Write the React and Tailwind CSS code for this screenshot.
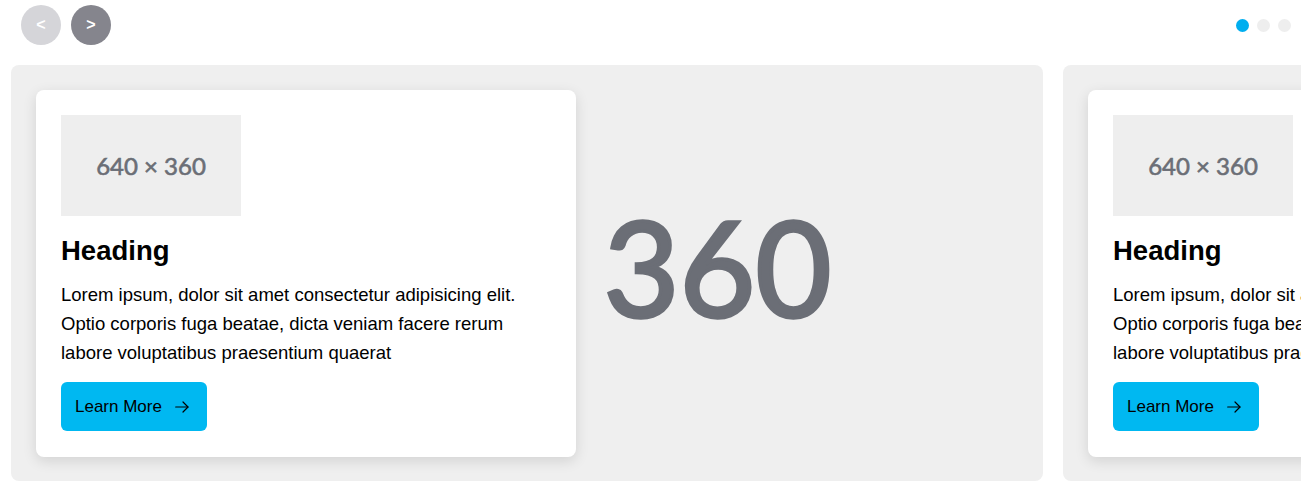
const slides = [1, 2, 3];

function Arrow() {
  return (
    <svg width="14" height="12" viewBox="0 0 14 12" fill="none" stroke="currentColor" strokeWidth="1.2" strokeLinecap="round" strokeLinejoin="round">
      <path d="M0.7 6h12.3" />
      <path d="M8 1l5 5-5 5" />
    </svg>
  );
}

function Slide() {
  return (
    <div className="relative shrink-0 w-[1032px] h-[416px] rounded-lg bg-[#efefef] overflow-hidden p-[25px]">
      <div className="absolute inset-0 flex items-center justify-center">
        <span className="font-['Lato',sans-serif] font-normal text-[131px] leading-none text-[#6b6e76] [-webkit-text-stroke:3.5px_#6b6e76] whitespace-nowrap -translate-y-[7px] translate-x-[5px]">
          640 × 360
        </span>
      </div>
      <div className="relative w-[540px] h-[367px] bg-white rounded-lg shadow-[0_4px_14px_rgba(0,0,0,0.12)] p-[25px] font-['Liberation_Sans',Arial,sans-serif]">
        <div className="w-[180px] h-[101px] bg-[#eeeeee] flex items-center justify-center">
          <span className="font-['Lato',sans-serif] font-normal text-[24px] text-[#6b6e76] [-webkit-text-stroke:0.6px_#6b6e76]">640 × 360</span>
        </div>
        <h2 className="mt-[15px] text-[27.5px] font-bold leading-[40px] text-black">Heading</h2>
        <p className="mt-[9px] text-[18.5px] leading-[29px] text-black">
          Lorem ipsum, dolor sit amet consectetur adipisicing elit. Optio corporis fuga beatae, dicta veniam facere rerum labore voluptatibus praesentium quaerat
        </p>
        <button className="mt-[15px] h-[49px] pl-[14px] pr-[18px] rounded-md bg-[#00b8f1] text-black text-[17px] flex items-center gap-[13px]">
          Learn More
          <Arrow />
        </button>
      </div>
    </div>
  );
}

export default function App() {
  return (
    <div className="w-[1312px] h-[489px] bg-white overflow-hidden font-['Liberation_Sans',Arial,sans-serif]">
      <div className="flex items-center justify-between px-[21px] pt-[5px]">
        <div className="flex gap-[10px]">
          <button className="w-10 h-10 rounded-full bg-[#d5d5d9] text-white font-bold text-[16px] flex items-center justify-center">&lt;</button>
          <button className="w-10 h-10 rounded-full bg-[#85858d] text-white font-bold text-[16px] flex items-center justify-center">&gt;</button>
        </div>
        <div className="flex gap-[8px]">
          <span className="w-[13px] h-[13px] rounded-full bg-[#00aeef]" />
          <span className="w-[13px] h-[13px] rounded-full bg-[#eeeeee]" />
          <span className="w-[13px] h-[13px] rounded-full bg-[#eeeeee]" />
        </div>
      </div>
      <div className="mx-[11px] mt-[20px] overflow-hidden">
        <div className="flex gap-[20px]">
          {slides.map(s => <Slide key={s} />)}
        </div>
      </div>
    </div>
  );
}
